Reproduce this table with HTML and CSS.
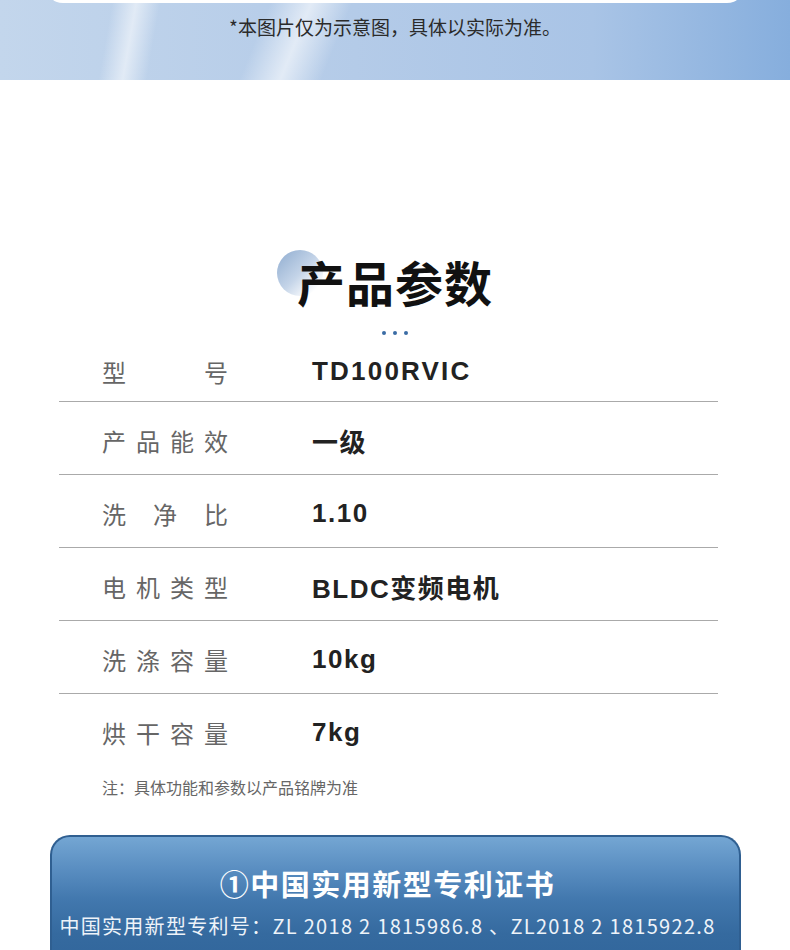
FILE: index.html
```html
<!DOCTYPE html>
<html lang="zh-CN">
<head>
    <meta charset="UTF-8">
    <meta name="viewport" content="width=device-width, initial-scale=1.0">
    <title>产品参数</title>
    <link rel="stylesheet" href="styles.css">
</head>
<body>
    <div class="banner">
        <div class="banner-card"></div>
        <p class="banner-note">*本图片仅为示意图，具体以实际为准。</p>
    </div>

    <div class="params">
        <div class="params-title">
            <span class="title-ball"></span>
            <h1>产品参数</h1>
        </div>
        <div class="dots"><i></i><i></i><i></i></div>

        <div class="spec-table">
            <div class="spec-row">
                <span class="spec-label">型号</span>
                <span class="spec-value wide">TD100RVIC</span>
            </div>
            <div class="spec-row">
                <span class="spec-label">产品能效</span>
                <span class="spec-value">一级</span>
            </div>
            <div class="spec-row">
                <span class="spec-label">洗净比</span>
                <span class="spec-value">1.10</span>
            </div>
            <div class="spec-row">
                <span class="spec-label">电机类型</span>
                <span class="spec-value">BLDC变频电机</span>
            </div>
            <div class="spec-row">
                <span class="spec-label">洗涤容量</span>
                <span class="spec-value">10kg</span>
            </div>
            <div class="spec-row last">
                <span class="spec-label">烘干容量</span>
                <span class="spec-value">7kg</span>
            </div>
        </div>
        <p class="spec-note">注：具体功能和参数以产品铭牌为准</p>
    </div>

    <div class="patent">
        <h2>①中国实用新型专利证书</h2>
        <p>中国实用新型专利号：ZL 2018 2 1815986.8 、ZL2018 2 1815922.8</p>
    </div>
</body>
</html>
```

FILE: styles.css
```css
body {
    margin: 0;
    background-color: #fff;
    font-family: "Noto Sans CJK SC", "Noto Sans", sans-serif;
    color: #333;
}
.banner {
    height: 80px;
    overflow: hidden;
    background:
        linear-gradient(100deg, transparent 14%, rgba(255, 255, 255, 0.55) 17%, transparent 20%),
        linear-gradient(112deg, transparent 33%, rgba(255, 255, 255, 0.6) 38%, transparent 43%),
        linear-gradient(90deg, #c3d6ec 0%, #b4cbe8 45%, #a9c4e6 75%, #86aedd 100%);
}
.banner-card {
    height: 24px;
    margin: -21px 45px 0;
    background-color: #fff;
    border-radius: 0 0 18px 18px;
}
.banner-note {
    margin: 12px 0 0;
    text-align: center;
    font-size: 19px;
    line-height: 24px;
    color: #2b2b2b;
}
.params {
    padding-top: 168px;
}
.params-title {
    display: flex;
    justify-content: center;
    align-items: center;
    position: relative;
    height: 66px;
}
.title-ball {
    position: absolute;
    left: calc(50% - 118px);
    top: 2px;
    width: 46px;
    height: 46px;
    border-radius: 50%;
    background: linear-gradient(135deg, #8facd0 0%, #c4d4e8 50%, #fff 85%);
}
.params-title h1 {
    position: relative;
    margin: 0;
    font-size: 48px;
    font-weight: 700;
    line-height: 66px;
    color: #111;
    letter-spacing: 1px;
}
.dots {
    display: flex;
    justify-content: center;
    gap: 7px;
    margin-top: 17px;
}
.dots i {
    width: 4px;
    height: 4px;
    border-radius: 50%;
    background-color: #3a6ca5;
}
.spec-table {
    margin: 0 72px 0 59px;
}
.spec-row {
    display: flex;
    align-items: center;
    box-sizing: border-box;
    height: 73px;
    padding: 4px 0 0 43px;
    border-bottom: 1px solid #aaa;
}
.spec-row:first-child {
    height: 67px;
    padding-top: 6px;
}
.spec-row.last {
    border-bottom: none;
}
.spec-label {
    width: 126px;
    margin-right: 84px;
    font-size: 24px;
    color: #666;
    text-align-last: justify;
}
.spec-value {
    font-family: "Liberation Sans", "Noto Sans CJK SC", sans-serif;
    font-size: 26px;
    font-weight: 700;
    color: #222;
    letter-spacing: 1.5px;
}
.spec-value.wide {
    letter-spacing: 2.2px;
}
.spec-note {
    margin: 8px 0 0 102px;
    font-size: 16px;
    color: #666;
}
.patent {
    margin: 36px 49px 0 50px;
    height: 140px;
    box-sizing: border-box;
    padding: 26px 16px 0 0;
    border: 2px solid #2f5f91;
    border-bottom: none;
    border-radius: 20px 20px 0 0;
    background: linear-gradient(180deg, #74a6d3 0%, #5b8fc2 22%, #4278ae 45%, #356a9f 70%, #30649a 100%);
    text-align: center;
    color: #fff;
}
.patent h2 {
    margin: 0;
    font-size: 29px;
    font-weight: 700;
    line-height: 40px;
    letter-spacing: 1.5px;
}
.patent p {
    margin: 5px 0 0;
    font-size: 20px;
    line-height: 36px;
    color: #eef3f9;
    letter-spacing: 1.3px;
}
```
